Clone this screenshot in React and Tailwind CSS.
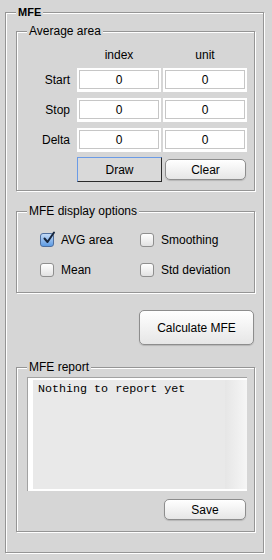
import React from 'react';

// etched group box, title sits over the top border
function Panel({ title, bold, className, children }) {
    return (
        <div className={`relative border border-[#959595] shadow-[inset_1px_1px_0_#ffffff,1px_1px_0_#ffffff] ${className}`}>
            <span
                className={`absolute left-[10px] top-[-8px] px-[2px] leading-[14px] bg-[#d6d6d6] ${bold ? 'text-[11px] font-bold' : 'text-[12px]'}`}
            >
                {title}
            </span>
            {children}
        </div>
    );
}

function Field({ value }) {
    return (
        <div className="w-[84px] h-[24px] bg-white pt-[2px] px-[2px] pb-[3px]">
            <div className="h-full border border-[#c6c6c6] flex items-center justify-center text-[12px] leading-none">
                {value}
            </div>
        </div>
    );
}

function AquaButton({ label, className }) {
    return (
        <button className={`rounded-[5px] border border-[#8d8d8d] bg-gradient-to-b from-[#ffffff] to-[#e6e6e6] shadow-[0_1px_1px_rgba(0,0,0,0.15)] text-[12px] leading-none flex items-center justify-center ${className}`}>
            {label}
        </button>
    );
}

function Checkbox({ checked, label }) {
    return (
        <div className="flex items-center gap-[7px] h-[14px]">
            {checked ? (
                <div className="relative w-[14px] h-[14px] rounded-[3px] border border-[#4e6f9f] bg-gradient-to-b from-[#c3daf6] to-[#5d9be3]">
                    <svg viewBox="0 0 14 14" className="absolute left-[1px] top-[-3px] w-[14px] h-[14px]">
                        <path d="M2.5 7.5 L5.5 11 L12 1.5" fill="none" stroke="#17263d" strokeWidth="2" strokeLinecap="round" strokeLinejoin="round" />
                    </svg>
                </div>
            ) : (
                <div className="w-[14px] h-[14px] rounded-[3px] border border-[#8f8f8f] bg-gradient-to-b from-[#ffffff] to-[#e2e2e2]" />
            )}
            <span className="text-[12px] leading-[14px]">{label}</span>
        </div>
    );
}

export default function App() {
    const rows = ['Start', 'Stop', 'Delta'];

    return (
        <div className="w-[272px] h-[560px] bg-[#d6d6d6] pt-[12px] pl-[5px] text-black font-['Liberation_Sans',Arial,sans-serif]">
            <Panel title="MFE" bold className="w-[259px] h-[541px] pt-[18px] pl-[10px]">
                {/* Average area */}
                <Panel title="Average area" className="w-[239px] h-[160px] pt-[16px]">
                    <div className="flex pl-[60px] gap-[2px] text-[12px] leading-[14px]">
                        <div className="w-[84px] text-center">index</div>
                        <div className="w-[84px] text-center">unit</div>
                    </div>
                    <div className="flex flex-col gap-[6px] mt-[6px]">
                        {rows.map((r) => (
                            <div key={r} className="flex items-center">
                                <div className="w-[53px] text-right text-[12px] leading-[14px]">{r}</div>
                                <div className="flex gap-[2px] ml-[7px]">
                                    <Field value="0" />
                                    <Field value="0" />
                                </div>
                            </div>
                        ))}
                    </div>
                    <div className="flex items-center mt-[5px] pl-[60px]">
                        <button className="w-[85px] h-[25px] border border-t-[#6b9be6] border-l-[#6b9be6] border-b-[#2b2b2b] border-r-[#2b2b2b] bg-[#d9d9d9] text-[12px] leading-none">
                            Draw
                        </button>
                        <AquaButton label="Clear" className="w-[81px] h-[21px] ml-[3px]" />
                    </div>
                </Panel>

                {/* Display options */}
                <Panel title="MFE display options" className="w-[239px] h-[82px] mt-[20px] pt-[21px] pl-[23px]">
                    <div className="grid grid-cols-[100px_1fr] gap-y-[16px]">
                        <Checkbox checked label="AVG area" />
                        <Checkbox label="Smoothing" />
                        <Checkbox label="Mean" />
                        <Checkbox label="Std deviation" />
                    </div>
                </Panel>

                <div className="w-[239px] flex justify-end pr-[1px] mt-[17px]">
                    <AquaButton label="Calculate MFE" className="w-[115px] h-[35px]" />
                </div>

                {/* Report */}
                <Panel title="MFE report" className="w-[239px] h-[165px] mt-[22px] pt-[9px] pl-[10px]">
                    <div className="w-[220px] h-[114px] border-t border-l border-[#a2a2a2] bg-white pl-[5px] pt-[2px] pb-[2px] flex">
                        <div className="flex-1 bg-[#e9e9e9] pl-[5px] pt-[2px] font-['Liberation_Mono','Courier_New',monospace] text-[11.7px] leading-[14px]">
                            Nothing to report yet
                        </div>
                        <div className="w-[22px] bg-gradient-to-r from-[#e6e6e6] to-[#f6f6f6]" />
                    </div>
                    <AquaButton label="Save" className="w-[82px] h-[21px] mt-[8px] ml-[137px]" />
                </Panel>
            </Panel>
        </div>
    );
}
